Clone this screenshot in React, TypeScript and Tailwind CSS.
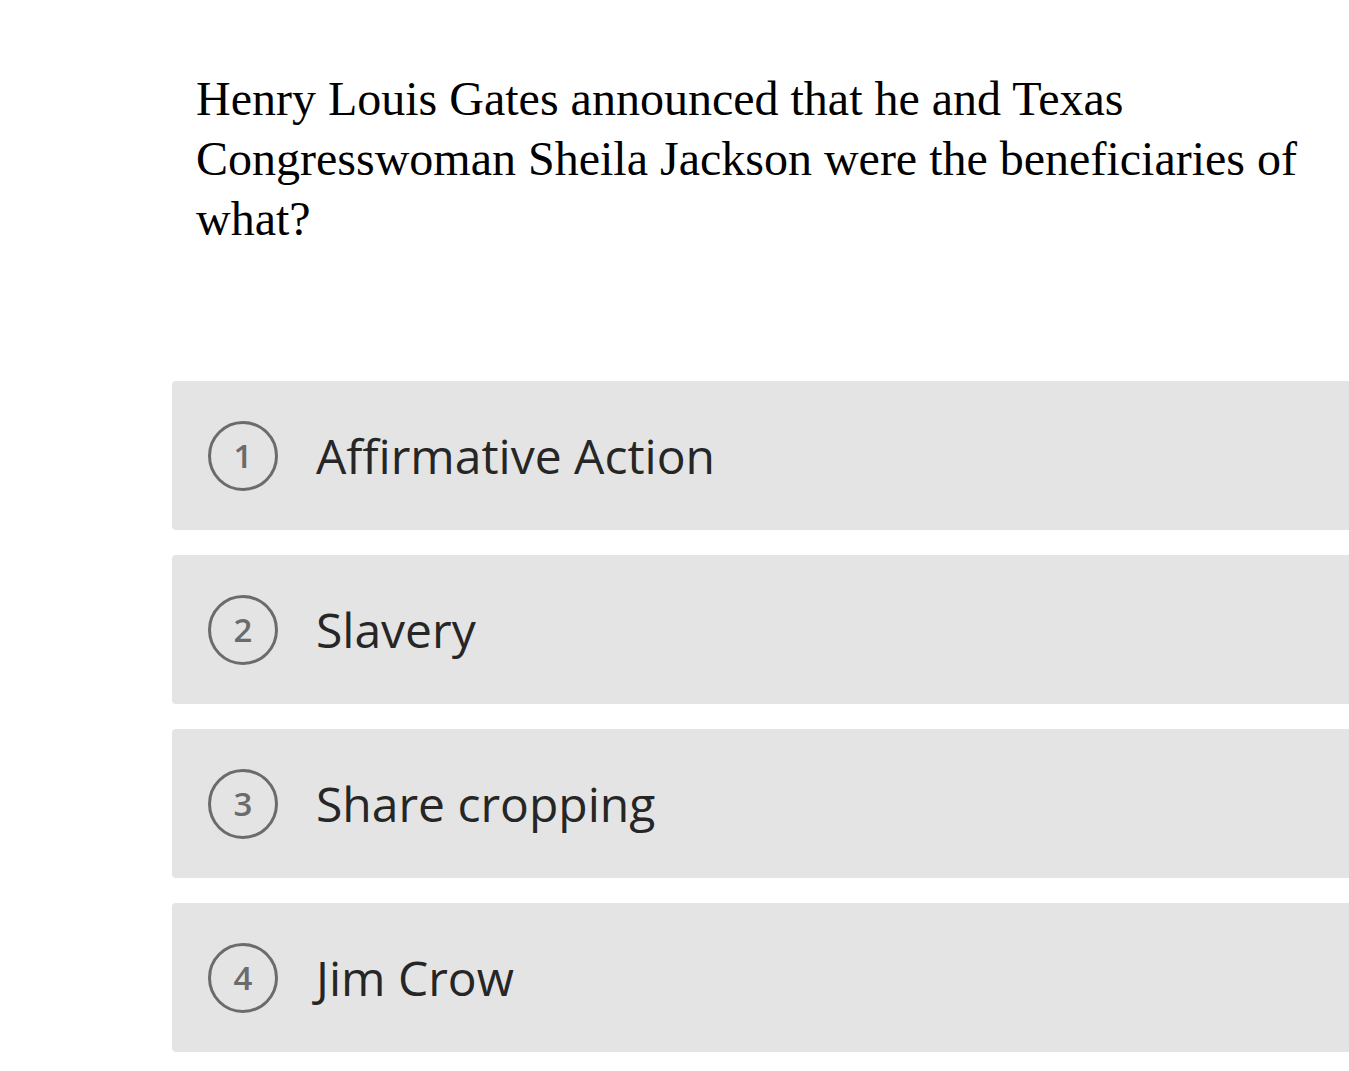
const options = ["Affirmative Action", "Slavery", "Share cropping", "Jim Crow"];

export default function App() {
  return (
    <div className="min-h-screen bg-white overflow-hidden">
      <div className="pl-[172px] pt-[69px]">
        <p className="pl-[24px] pr-[40px] font-['Liberation_Serif',serif] text-[48px] leading-[60px] text-black">
          Henry Louis Gates announced that he and Texas Congresswoman Sheila Jackson were the beneficiaries of what?
        </p>
        <div className="mt-[132px] flex flex-col gap-[25px]">
          {options.map((o, i) => (
            <div
              key={o}
              className="flex h-[149px] w-[1200px] items-center rounded-l-[4px] bg-[#e4e4e4] pl-[36px]"
            >
              <div className="flex h-[70px] w-[70px] shrink-0 items-center justify-center rounded-full border-[3px] border-[#6b6b6b] font-['Open_Sans',sans-serif] text-[33px] font-semibold text-[#6b6b6b]">
                {i + 1}
              </div>
              <span className="ml-[38px] font-['Open_Sans',sans-serif] text-[48px] text-[#262626]">{o}</span>
            </div>
          ))}
        </div>
      </div>
    </div>
  );
}
